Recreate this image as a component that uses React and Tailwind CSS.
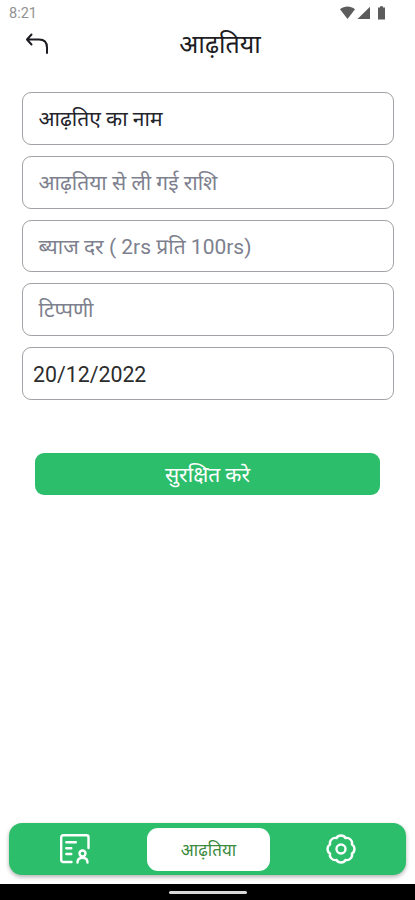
import { useState } from 'react'

const fields = [
  { id: 'name', label: 'आढ़तिए का नाम', filled: true },
  { id: 'amount', label: 'आढ़तिया से ली गई राशि' },
  { id: 'rate', label: 'ब्याज दर ( 2rs प्रति 100rs)' },
  { id: 'note', label: 'टिप्पणी' },
]

function StatusBar(){
  return (
    <div className="h-[26px] pl-[9px] pr-[29px] flex items-center justify-between font-[Roboto,sans-serif] text-[#929292]">
      <span className="text-[14.5px] leading-none pt-[3px]">8:21</span>
      <svg width="46" height="14" viewBox="0 0 46 14" fill="#5c5c5c">
        <path d="M0 3.2C4.5-.4 10.5-.4 15 3.2L7.5 13z" />
        <path d="M30 .8V13H17.5z" />
        <path d="M38 1.5h2V.2h3v1.3h2V13.5h-7z" />
      </svg>
    </div>
  )
}

function BackIcon(){
  return (
    <svg width="24" height="24" viewBox="0 0 24 24" fill="none" stroke="#1c1c22" strokeWidth="2" strokeLinecap="round" strokeLinejoin="round">
      <path d="M6.5 1.5 2 6.500 6.500 11.500M2.500 6.500H14c5 0 8 3 8 8V20" />
    </svg>
  )
}

function LedgerIcon(){
  return (
    <svg width="30" height="30" viewBox="0 0 30 30" fill="none" stroke="#fff" strokeWidth="2.4" strokeLinecap="round" strokeLinejoin="round">
      <path d="M11.5 28H3.2a2 2 0 0 1-2-2V3.2a2 2 0 0 1 2-2h23.3a2 2 0 0 1 2 2v10.8" />
      <path d="M6.3 8.3h9.5M6.3 14.2h5M6.3 20h5" />
      <circle cx="22.500" cy="19.500" r="3" />
      <path d="M17.5 28.5c0-3 2-4.800 5-4.800s5 1.800 5 4.800" />
    </svg>
  )
}

function GearIcon(){
  return (
    <svg width="30" height="30" viewBox="0 0 30 30" fill="none" stroke="#fff" strokeWidth="2.4" strokeLinejoin="round">
      <path d="M10.48 4.1C12.2.7 17.8.7 19.52 4.1C23.13 2.91 27.09 6.87 25.9 10.48C29.3 12.2 29.3 17.8 25.9 19.52C27.09 23.13 23.13 27.09 19.52 25.9C17.8 29.3 12.2 29.3 10.48 25.9C6.87 27.09 2.91 23.13 4.1 19.52C.7 17.8.7 12.2 4.1 10.48C2.91 6.87 6.87 2.91 10.48 4.1Z" />
      <circle cx="15" cy="15" r="4.5" />
    </svg>
  )
}

export default function App(){
  const [date] = useState('20/12/2022')

  return (
    <div className="h-[900px] w-full bg-white flex flex-col overflow-hidden font-[Roboto,'Noto_Sans','Noto_Sans_Devanagari',sans-serif]">
      <StatusBar />
      <header className="h-9 px-[25px] grid grid-cols-[24px_1fr_24px] items-center">
        <button aria-label="Back"><BackIcon /></button>
        <h1 className="text-center text-[25px] leading-9 text-[#1c1c22] pl-[25px] pt-px">आढ़तिया</h1>
      </header>

      <form className="mt-[30px] px-[22px] flex flex-col gap-[11px]">
        {fields.map(f => (
          <div key={f.id} className={`h-[52.75px] w-[372px] rounded-[9px] border border-[#9fa2a6] px-[15.5px] flex items-center text-[21px] ${f.filled ? 'text-[#24242c]' : 'text-[#7d808e]'}`}>
            <span className="whitespace-nowrap pt-[3px]">{f.label}</span>
          </div>
        ))}
        <div className="h-[52.75px] w-[372px] rounded-[9px] border border-[#9fa2a6] px-[10px] flex items-center text-[21.3px] text-[#2c2c2c]">
          <span className="pt-[3px]">{date}</span>
        </div>
      </form>

      <button className="mt-[53px] mx-[35px] w-[345px] h-[42px] pt-[3px] rounded-[9px] bg-[#2dbe6c] text-white text-[21px]">सुरक्षित करे</button>

      <nav className="mt-auto mb-[9px] mx-[9px] h-[52px] rounded-[13px] bg-[#2dbe6c] shadow-[0_2px_4px_rgba(0,0,0,0.3)] grid grid-cols-[138px_123px_1fr] items-center">
        <button aria-label="Ledger" className="pl-[51px]"><LedgerIcon /></button>
        <div className="h-[43px] pt-[3px] rounded-[11px] bg-white text-[#3b8a3e] text-[17px] flex items-center justify-center">आढ़तिया</div>
        <button aria-label="Settings" className="pl-[56px]"><GearIcon /></button>
      </nav>
      <div className="h-4 bg-black flex justify-center pt-[7px]">
        <div className="w-[78px] h-[3px] rounded-full bg-[#d8d8d8]"></div>
      </div>
    </div>
  )
}
